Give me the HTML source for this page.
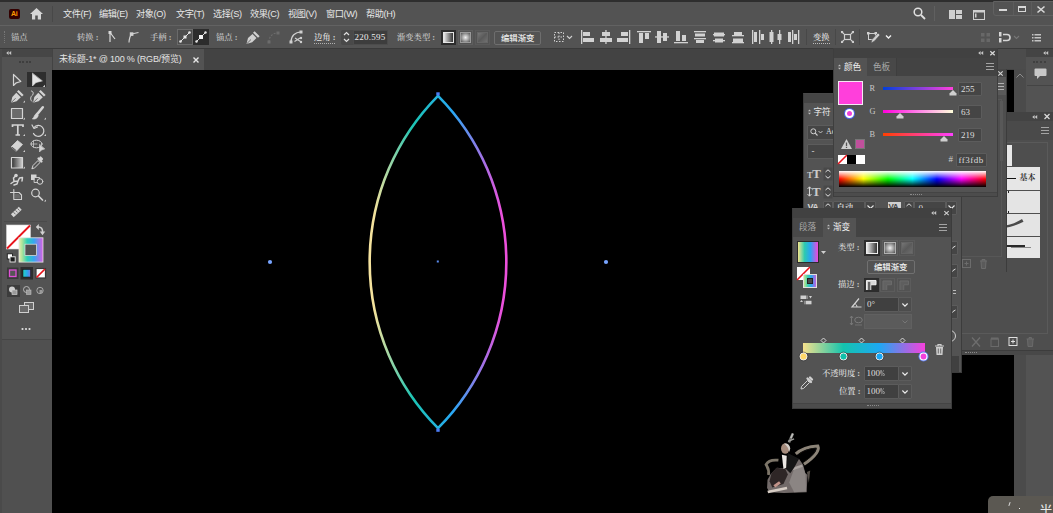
<!DOCTYPE html>
<html><head><meta charset="utf-8">
<style>
*{box-sizing:border-box;margin:0;padding:0}
html,body{width:1053px;height:513px;overflow:hidden;background:#535353}
body{position:relative;font-family:"Liberation Sans","Noto Sans CJK SC",sans-serif;font-size:9px;color:#dcdcdc}
.a{position:absolute}
.t{position:absolute;white-space:nowrap;line-height:12px;font-size:9px;color:#d8d8d8}
.m{position:absolute;white-space:nowrap;line-height:12px;font-size:9.2px;letter-spacing:-0.4px;color:#e6e6e6;top:5.5px}
.s{position:absolute;white-space:nowrap;line-height:12px;font-size:8.3px;color:#d0d0d0;font-family:"Liberation Serif","Noto Serif CJK SC",serif;font-weight:600}
.n{position:absolute;white-space:nowrap;line-height:12px;font-size:9px;color:#dedede;font-family:"Liberation Serif","Noto Serif CJK SC",serif}
.inp{position:absolute;background:#454545;border:1px solid #5c5c5c;border-radius:1px}
svg{position:absolute;overflow:visible}
</style></head><body>
<!-- canvas -->
<div class="a" id="canvas" style="left:52px;top:70px;width:962px;height:443px;background:#000"></div>
<!-- top strip -->
<div class="a" style="left:0;top:0;width:1053px;height:2px;background:#2e2e2e"></div>
<!-- menubar -->
<div class="a" id="menubar" style="left:0;top:2px;width:1053px;height:23px;background:#535353">
  <!-- Ai logo -->
  <div class="a" style="left:9px;top:7px;width:11px;height:10px;background:#330000;border-radius:2px"></div>
  <div class="a" style="left:11px;top:6px;font:bold 7px/12px 'Liberation Sans',sans-serif;color:#ff9a00;letter-spacing:-0.3px">Ai</div>
  <!-- home -->
  <svg style="left:30px;top:6px" width="13" height="12" viewBox="0 0 13 12"><path d="M6.5 0 L13 6 H11 V11.5 H7.8 V7.5 H5.2 V11.5 H2 V6 H0 Z" fill="#d6d6d6"/></svg>
  <div class="a" style="left:52px;top:4px;width:1px;height:16px;background:#484848"></div>
  <div class="m" style="left:63px">文件(F)</div>
  <div class="m" style="left:99px">编辑(E)</div>
  <div class="m" style="left:136px">对象(O)</div>
  <div class="m" style="left:176px">文字(T)</div>
  <div class="m" style="left:213px">选择(S)</div>
  <div class="m" style="left:250px">效果(C)</div>
  <div class="m" style="left:288px">视图(V)</div>
  <div class="m" style="left:326px">窗口(W)</div>
  <div class="m" style="left:366px">帮助(H)</div>
  <!-- search -->
  <svg style="left:913px;top:5px" width="13" height="13" viewBox="0 0 13 13"><circle cx="5" cy="5" r="3.8" fill="none" stroke="#e0e0e0" stroke-width="1.5"/><path d="M8 8 L12 12" stroke="#e0e0e0" stroke-width="1.8"/></svg>
  <div class="a" style="left:934px;top:4px;width:1px;height:15px;background:#606060"></div>
  <!-- arrange docs -->
  <svg style="left:949px;top:8px" width="13" height="9" viewBox="0 0 13 9"><rect x="0" y="0" width="6" height="9" fill="#d0d0d0"/><rect x="7" y="0" width="6" height="4" fill="#d0d0d0"/><rect x="7" y="5" width="6" height="4" fill="#d0d0d0"/></svg>
  <!-- workspace -->
  <svg style="left:973px;top:8px" width="12" height="10" viewBox="0 0 12 10"><rect x="0.5" y="0.5" width="11" height="9" fill="none" stroke="#d0d0d0" stroke-width="1"/><rect x="1" y="1" width="10" height="1.5" fill="#d0d0d0"/><rect x="2" y="3.5" width="1.5" height="4" fill="#d0d0d0"/></svg>
  <!-- window buttons -->
  <div class="a" style="left:993px;top:-1px;width:62px;height:15px;border:1px solid #616161;border-radius:0 0 0 3px"></div>
  <div class="a" style="left:1013px;top:0;width:1px;height:13px;background:#5c5c5c"></div>
  <div class="a" style="left:1031px;top:0;width:1px;height:13px;background:#5c5c5c"></div>
  <div class="a" style="left:999px;top:7px;width:8px;height:2px;background:#d8d8d8"></div>
  <div class="a" style="left:1018px;top:4px;width:8px;height:6px;border:2px solid #d8d8d8;border-width:2px 1.5px 1.5px 1.5px"></div>
  <svg style="left:1037px;top:4px" width="8" height="7" viewBox="0 0 8 7"><path d="M0.5 0.5 L7.5 6.5 M7.5 0.5 L0.5 6.5" stroke="#d8d8d8" stroke-width="1.6"/></svg>
</div>
<!-- control bar -->
<div class="a" id="ctrl" style="left:0;top:25px;width:1053px;height:24px;background:#535353;border-top:1px solid #626262;border-bottom:1px solid #3a3a3a">
  <div class="a" style="left:4px;top:5px;width:2px;height:12px;border-left:1px dotted #777"></div>
  <div class="s" style="left:11px;top:6px;color:#bcbcbc">锚点</div>
  <div class="s" style="left:77px;top:6px;color:#c0c0c0">转换 :</div>
  <svg style="left:107px;top:5px" width="10" height="12" viewBox="0 0 10 12"><path d="M3 1 V11 M3 1.5 L8 8" stroke="#d8d8d8" stroke-width="1.2" fill="none"/><rect x="1.5" y="0" width="3" height="3" fill="#d8d8d8"/></svg>
  <svg style="left:127px;top:5px" width="12" height="12" viewBox="0 0 12 12"><path d="M2 11.500 C2.300 7 3 5 4.500 3.200 C7 2.300 9 2 11.500 1.500" stroke="#d0d0d0" stroke-width="1.200" fill="none"/><rect x="2.800" y="1.300" width="3.600" height="3.600" fill="#d0d0d0"/></svg>
  <div class="s" style="left:150px;top:6px;color:#c0c0c0">手柄 :</div>
  <div class="a" style="left:177px;top:3px;width:16px;height:16px;border:1px solid #6a6a6a;background:#4c4c4c"></div>
  <div class="a" style="left:193px;top:3px;width:16px;height:16px;background:#2c2c2c"></div>
  <svg style="left:179px;top:5px" width="12" height="12" viewBox="0 0 12 12"><path d="M1 11 L11 1" stroke="#e0e0e0" stroke-width="1"/><rect x="4.5" y="4.5" width="3" height="3" fill="#e8e8e8"/><circle cx="1.5" cy="10.5" r="1.3" fill="#e8e8e8"/><circle cx="10.5" cy="1.5" r="1.3" fill="#e8e8e8"/></svg>
  <svg style="left:195px;top:5px" width="12" height="12" viewBox="0 0 12 12"><path d="M1 11 L11 1" stroke="#e0e0e0" stroke-width="1"/><rect x="4" y="4" width="4" height="4" fill="#f4f4f4"/><circle cx="1.5" cy="10.5" r="1.2" fill="#e8e8e8"/><circle cx="10.5" cy="1.5" r="1.2" fill="#e8e8e8"/></svg>
  <div class="s" style="left:216px;top:6px;color:#c0c0c0">锚点 :</div>
  <!-- pen icon -->
  <svg style="left:245px;top:4px" width="15" height="15" viewBox="0 0 15 15"><path d="M1.500 14 L3 8 L7.500 4 L11.500 8 L7.200 12.300 Z" fill="#d0d0d0"/><path d="M1.800 13.700 L6 9.500" stroke="#535353" stroke-width="0.800"/><path d="M8.800 2 L13.800 7" stroke="#d0d0d0" stroke-width="2.300"/></svg>
  <svg style="left:267px;top:5px" width="13" height="13" viewBox="0 0 13 13"><path d="M2 11 C2 5.500 5.500 2 11 2" stroke="#6c6c6c" stroke-width="1.100" fill="none" stroke-dasharray="2 1.300"/><rect x="0.500" y="9.500" width="3" height="3" fill="#6c6c6c"/><rect x="9.500" y="0.500" width="3" height="3" fill="#6c6c6c"/></svg>
  <svg style="left:289px;top:4px" width="14" height="14" viewBox="0 0 14 14"><path d="M2 12 C2 6 6 2 12 2" stroke="#d0d0d0" stroke-width="1.200" fill="none"/><rect x="0.500" y="10.500" width="3" height="3" fill="#d0d0d0"/><rect x="10.500" y="0.500" width="3" height="3" fill="#d0d0d0"/><path d="M5.500 11.500 L11 8 M6 8 L11.500 11.500" stroke="#d0d0d0" stroke-width="1.100"/><circle cx="12" cy="8" r="1.200" fill="#d0d0d0"/><circle cx="12" cy="12" r="1.200" fill="#d0d0d0"/></svg>
  <div class="s" style="left:314px;top:5px;color:#dedede;border-bottom:1px dotted #b0b0b0;line-height:11px;top:6px">边角 :</div>
  <div class="a" style="left:340.500px;top:4px;width:12px;height:15px;background:#494949;border-radius:2px 0 0 2px"></div>
  <svg style="left:343px;top:5px" width="7" height="12" viewBox="0 0 7 12"><path d="M1 4 L3.5 1.5 L6 4 M1 8 L3.5 10.5 L6 8" stroke="#e0e0e0" stroke-width="1.2" fill="none"/></svg>
  <div class="a" style="left:352.500px;top:4px;width:35px;height:15px;background:#3d3d3d;border:1px solid #4c4c4c"></div>
  <div class="n" style="left:354.5px;top:5px;color:#ececec;letter-spacing:0.25px">220.595</div>
  <div class="s" style="left:397px;top:6px;color:#c0c0c0">渐变类型 :</div>
  <div class="a" style="left:441px;top:4px;width:15px;height:15px;background:#2c2c2c"></div>
  <div class="a" style="left:443px;top:6px;width:11px;height:11px;border:1px solid #e4e4e4;background:linear-gradient(90deg,#e8e8e8,#333)"></div>
  <div class="a" style="left:458px;top:4px;width:15px;height:15px;border:1px solid #5e5e5e"></div>
  <div class="a" style="left:460px;top:6px;width:11px;height:11px;border:1px solid #9a9a9a;background:radial-gradient(circle,#f0f0f0,#555)"></div>
  <div class="a" style="left:475px;top:4px;width:15px;height:15px;border:1px solid #5a5a5a"></div>
  <div class="a" style="left:477px;top:6px;width:11px;height:11px;border:1px solid #666;background:linear-gradient(135deg,#777,#5a5a5a 50%,#707070)"></div>
  <div class="a" style="left:494px;top:4.500px;width:47px;height:14.500px;border:1px solid #6e6e6e;border-radius:2px"></div>
  <div class="t" style="left:501px;top:5.800px;color:#ececec;font-weight:500;font-size:8.400px">编辑渐变</div>
  <!-- grid -->
  <svg style="left:553px;top:5px" width="20" height="12" viewBox="0 0 20 12"><rect x="1.5" y="1.5" width="9" height="9" fill="none" stroke="#d0d0d0" stroke-width="1" stroke-dasharray="1.5 1.5"/><path d="M1.5 6 H10.5 M6 1.5 V10.5" stroke="#d0d0d0" stroke-width="1" stroke-dasharray="1.5 1.5"/><path d="M14 5 L16.5 7.5 L19 5" stroke="#d0d0d0" stroke-width="1.1" fill="none"/></svg>
  <!-- align icons -->
  <svg style="left:580px;top:4px" width="230" height="14" viewBox="0 0 230 14">
   <g fill="#d2d2d2">
    <rect x="1" y="0" width="1.3" height="14"/><rect x="3" y="2" width="7" height="4"/><rect x="3" y="8" width="11" height="4"/>
    <rect x="25.3" y="0" width="1.3" height="14"/><rect x="22" y="2" width="8" height="4"/><rect x="20" y="8" width="12" height="4"/>
    <rect x="49" y="0" width="1.3" height="14"/><rect x="41" y="2" width="7" height="4"/><rect x="37" y="8" width="11" height="4"/>
    <rect x="57" y="1" width="14" height="1.3"/><rect x="59" y="3" width="4" height="10"/><rect x="65" y="3" width="4" height="6"/>
    <rect x="75" y="6.3" width="14" height="1.3"/><rect x="77" y="1" width="4" height="12"/><rect x="83" y="3" width="4" height="8"/>
    <rect x="94" y="12" width="14" height="1.3"/><rect x="96" y="1" width="4" height="10"/><rect x="102" y="5" width="4" height="6"/>
    <rect x="114" y="1" width="12" height="1.3"/><rect x="115" y="3.5" width="10" height="3"/><rect x="114" y="8" width="12" height="1.3"/><rect x="116" y="10" width="8" height="3"/>
    <rect x="133" y="4" width="12" height="1.3"/><rect x="134" y="2.5" width="10" height="4"/><rect x="133" y="10" width="12" height="1.3"/><rect x="135" y="8.5" width="8" height="4"/>
    <rect x="152" y="5" width="12" height="1.3"/><rect x="154" y="2" width="8" height="3"/><rect x="152" y="12" width="12" height="1.3"/><rect x="153" y="8.5" width="10" height="3.5"/>
    <rect x="172" y="0" width="1.3" height="14"/><rect x="174" y="2" width="3" height="10"/><rect x="179" y="0" width="1.3" height="14"/><rect x="181" y="4" width="3" height="6"/>
    <rect x="191" y="0" width="1.3" height="14"/><rect x="189.5" y="2" width="4" height="10"/><rect x="199" y="0" width="1.3" height="14"/><rect x="197.5" y="4" width="4" height="6"/>
    <rect x="212" y="0" width="1.3" height="14"/><rect x="208" y="2" width="3" height="10"/><rect x="218" y="0" width="1.3" height="14"/><rect x="214" y="4" width="3" height="6"/>
   </g>
  </svg>
  <div class="a" style="left:806px;top:3px;width:1px;height:16px;background:#484848"></div>
  <div class="s" style="left:813px;top:6px;color:#dedede;border-bottom:1px dotted #bbb;line-height:11px">变换</div>
  <div class="a" style="left:835px;top:3px;width:1px;height:16px;background:#484848"></div>
  <svg style="left:841px;top:5px" width="13" height="12" viewBox="0 0 13 12"><rect x="3.5" y="3.5" width="6" height="5" fill="none" stroke="#d0d0d0" stroke-width="1.2"/><path d="M0.5 0.5 L3 3 M12.5 0.5 L10 3 M0.5 11.5 L3 9 M12.5 11.5 L10 9" stroke="#d0d0d0" stroke-width="1.2"/><path d="M0 0 H2.5 L0 2.5 Z M13 0 H10.5 L13 2.5 Z M0 12 H2.5 L0 9.500 Z M13 12 H10.5 L13 9.5 Z" fill="#d0d0d0"/></svg>
  <div class="a" style="left:859px;top:3px;width:1px;height:16px;background:#484848"></div>
  <svg style="left:867px;top:4px" width="28" height="14" viewBox="0 0 28 14"><rect x="1.5" y="3.5" width="7" height="6" fill="none" stroke="#d0d0d0" stroke-width="1"/><rect x="0" y="2" width="2.5" height="2.5" fill="#d0d0d0"/><rect x="7.500" y="2" width="2.5" height="2.5" fill="#d0d0d0"/><path d="M4 13 L5 9.500 L11 3 L13 5 L7 11.5 Z" fill="#d0d0d0" stroke="#535353" stroke-width="0.6"/><path d="M19 5.500 L21.5 8 L24 5.500" stroke="#f0f0f0" stroke-width="1.4" fill="none"/></svg>
  <!-- right icons -->
  <svg style="left:981px;top:7px" width="9" height="9" viewBox="0 0 9 9"><g fill="#686868"><rect x="0" y="0" width="3.500" height="3.500"/><rect x="5.500" y="0" width="3.500" height="3.500"/><rect x="0" y="5.500" width="3.500" height="3.500"/><rect x="5.500" y="5.500" width="3.500" height="3.500"/></g></svg>
  <svg style="left:999px;top:6px" width="24" height="11" viewBox="0 0 24 11"><rect x="0" y="0" width="2.500" height="4.500" fill="#d6d6d6"/><rect x="0" y="6" width="2.500" height="4.500" fill="#d6d6d6"/><path d="M4 2.500 H8 A2.800 2.800 0 0 1 8 8.500 H4" stroke="#d6d6d6" stroke-width="1.600" fill="none"/><path d="M15 4 L17.500 6.500 L20 4" stroke="#777" stroke-width="1.100" fill="none"/></svg>
  <svg style="left:1032px;top:8px" width="9" height="8" viewBox="0 0 9 8"><g fill="#c4c4c4"><rect x="0" y="0" width="1.500" height="1.500"/><rect x="2.500" y="0" width="6.500" height="1.500"/><rect x="0" y="3" width="1.500" height="1.500"/><rect x="2.500" y="3" width="6.500" height="1.500"/><rect x="0" y="6" width="1.500" height="1.500"/><rect x="2.500" y="6" width="6.500" height="1.500"/></g></svg>
</div>
<!-- tab bar -->
<div class="a" id="tabbar" style="left:52px;top:49px;width:974px;height:21px;background:#434343"></div>
<div class="a" style="left:998px;top:49px;width:28px;height:20px;background:#4c4c4c"></div>
<div class="a" id="tab" style="left:53px;top:49px;width:151px;height:21px;background:#535353"></div>
<div class="t" style="left:59px;top:52.5px;color:#e4e4e4;font-size:9px;letter-spacing:-0.18px">未标题-1* @ 100 % (RGB/预览)</div>
<svg style="left:192.5px;top:56.5px" width="6" height="6" viewBox="0 0 6 6"><path d="M0.500 0.500 L5.500 5.500 M5.500 0.500 L0.500 5.500" stroke="#e8e8e8" stroke-width="1.400"/></svg>
<!-- toolbar -->
<div class="a" id="toolbar" style="left:0;top:49px;width:52px;height:464px;background:#535353;border-left:2px solid #4a4a4a">
</div>
<div class="a" style="left:2px;top:49px;width:50px;height:8px;background:#464646"></div>
<svg style="left:6px;top:51px" width="6" height="4" viewBox="0 0 6 4"><path d="M2.600 0.100 L0.200 2 L2.600 3.900 Z M5.200 0.100 L2.800 2 L5.200 3.900 Z" fill="#c6c6c6"/></svg>
<div class="a" style="left:19px;top:61px;width:12px;height:2px;border-top:2px dotted #3e3e3e"></div>
<div class="a" style="left:2px;top:339px;width:50px;height:1px;background:#454545"></div>
<div class="a" style="left:4px;top:221px;width:43px;height:1px;background:#4a4a4a"></div>
<div class="a" style="left:2px;top:340px;width:50px;height:173px;background:#505050"></div>
<!-- selected tool bg -->
<div class="a" style="left:27px;top:72px;width:19px;height:15px;background:#2e2e2e"></div>
<svg id="tools" style="left:0;top:0" width="52" height="340" viewBox="0 0 52 340">
 <g fill="none" stroke="#d4d4d4" stroke-width="1.200" stroke-linejoin="round" stroke-linecap="round">
  <!-- selection hollow arrow -->
  <path d="M13.500 74.500 V85.500 L16.300 82.800 L20.800 81.500 Z"/>
  <!-- direct selection filled -->
  <path d="M32.500 73.500 V86 L36 82.500 L42 81 Z" fill="#e4e4e4" stroke="#e4e4e4" stroke-width="0.600"/>
  <!-- pen -->
  <path d="M11 102.800 L12.300 97 L16.300 92.800 L20.800 97.300 L16.600 101.300 Z" fill="#d4d4d4" stroke="none"/>
  <path d="M11.300 102.500 L15.300 98.500" stroke="#535353" stroke-width="0.800"/>
  <path d="M17.800 90.800 L22.800 95.800" stroke-width="2.300" stroke-linecap="butt"/>
  <!-- curvature -->
  <path d="M33 102.800 L34.300 97 L38.300 92.800 L42.800 97.300 L38.600 101.300 Z" fill="#d4d4d4" stroke="none"/>
  <path d="M33.300 102.500 L37.300 98.500" stroke="#535353" stroke-width="0.800"/>
  <path d="M39.800 90.800 L44.800 95.800" stroke-width="2.300" stroke-linecap="butt"/>
  <path d="M31.500 91 C34 91.500 33.500 94.500 32 95.500 C30 97.500 30.500 100.500 32 101.500" stroke-width="1"/>
  <!-- rectangle -->
  <rect x="11.500" y="108.500" width="11" height="10" fill="#6a6a6a"/>
  <!-- brush -->
  <path d="M42.800 107.300 L37.300 114" stroke-width="2.600"/>
  <path d="M36.300 113.500 L38.300 115.500 C37.500 118.500 35 119.500 32.300 119 C34 118 34 115 36.300 113.500 Z" fill="#d4d4d4" stroke-width="0.600"/>
  <!-- T -->
  <path d="M12.500 127 V125 H23 V127 M17.800 125 V135 M15.500 135 H20" stroke-width="1.700" stroke-linecap="butt" stroke-linejoin="miter"/>
  <!-- rotate -->
  <path d="M34 127.500 A5.500 5.500 0 1 1 33.500 133.500" stroke-width="1.200"/>
  <path d="M32 125 L34 128.500 L37.500 127" stroke-width="1.200"/>
  <path d="M33.500 133.500 A5.500 5.500 0 0 0 36 136" stroke-dasharray="1 1.300" stroke-width="1"/>
  <!-- eraser -->
  <path d="M11.500 146.500 L17.500 140.500 L22.500 144.500 L16.500 151 Z" fill="#d4d4d4" stroke-width="0.800"/>
  <path d="M12.500 147.500 L16 150.500" stroke="#535353" stroke-width="1"/>
  <!-- shape builder-ish -->
  <ellipse cx="36.500" cy="144" rx="5.500" ry="3.800" stroke-width="1"/>
  <path d="M33.500 141 V147 M31 144 H37" stroke-width="0.700"/>
  <path d="M39.500 144.500 V152 L41.500 150 L44.500 149 Z" fill="#d4d4d4" stroke-width="0.600"/>
  <!-- gradient -->
  <rect x="11.500" y="157.500" width="11" height="10.500" fill="url(#gg)"/>
  <!-- eyedropper -->
  <path d="M32 168.500 L33 165.500 L38 160.500 L40 162.500 L35 167.500 Z" stroke-width="1"/>
  <path d="M38.500 158.500 L41.500 161.500 M40.500 157.500 L42 159" stroke-width="2.200"/>
  <!-- puppet warp -->
  <path d="M11 183.500 L14 181.500 L13.500 178 L16 175.500 M14 181.500 L18 181 L19.500 178 L22.500 177.500 L22 181 M18 181 L17 184 L14 185" stroke-width="1.500"/>
  <circle cx="16" cy="175.500" r="1.200" fill="#d4d4d4"/>
  <!-- shapes -->
  <rect x="31" y="174.500" width="5.500" height="5.500" fill="#d4d4d4" stroke="none"/>
  <rect x="34.500" y="177.500" width="5" height="5" fill="#535353" stroke-width="0.900"/>
  <circle cx="40" cy="181.500" r="2.800" fill="#535353" stroke-width="1"/>
  <!-- artboard -->
  <path d="M10.500 192.500 H14 M13.800 189.500 V199 M13.800 192.500 H19 L21.500 195 V199.500 H13.800" stroke-width="1.100"/>
  <path d="M15 194 H18.500 L20.500 196 V198.500 H15 Z" fill="#6a6a6a" stroke="none"/>
  <!-- zoom -->
  <circle cx="35.500" cy="193" r="3.800" stroke-width="1.200"/>
  <path d="M38.500 196 L42.500 200" stroke-width="1.700"/>
  <!-- ruler-like -->
  <path d="M10.900 214.300 L18.800 206.700 L21.700 209.700 L13.700 217.300 Z" fill="#d4d4d4" stroke="none"/><path d="M13.800 212.500 L15.200 214 M15.800 210.600 L17.200 212.100 M17.800 208.700 L19.200 210.200" stroke="#535353" stroke-width="0.800"/>
 </g>
 <defs><linearGradient id="gg" x1="0" x2="1" y1="0" y2="0"><stop offset="0" stop-color="#303030"/><stop offset="1" stop-color="#d0d0d0"/></linearGradient></defs>
 <!-- small corner triangles -->
 <g fill="#cfcfcf">
  <path d="M45 87 V84.800 L42.800 87 Z"/>
  <path d="M25 102.500 V100.500 L23 102.500 Z"/>
  <path d="M25 119.500 V117.500 L23 119.500 Z"/><path d="M46 119.500 V117.500 L44 119.500 Z"/>
  <path d="M25 136 V134 L23 136 Z"/><path d="M46 136 V134 L44 136 Z"/>
  <path d="M25 152 V150 L23 152 Z"/>
  <path d="M25 168.500 V166.500 L23 168.500 Z"/>
  <path d="M46 201.500 V199.500 L44 201.500 Z"/>
 </g>
 <!-- fill (none) -->
 <rect x="6.500" y="225" width="24" height="24" fill="#ffffff" stroke="#d8d8d8" stroke-width="0.600"/>
 <path d="M7 248.500 L30 225.500" stroke="#e8141c" stroke-width="1.800"/>
 <!-- stroke box gradient -->
 <rect x="19" y="237.800" width="24" height="24.300" fill="url(#sg)" stroke="#e4e4e4" stroke-width="0.800"/>
 <rect x="25" y="244.200" width="11.600" height="11.300" fill="#525252" stroke="#e8e8e8" stroke-width="0.700"/>
 <defs><linearGradient id="sg" x1="0" x2="1" y1="0" y2="0"><stop offset="0" stop-color="#e4eeb8"/><stop offset="0.120" stop-color="#b4e49a"/><stop offset="0.340" stop-color="#2ed0b4"/><stop offset="0.620" stop-color="#36a6f0"/><stop offset="1" stop-color="#d860e4"/></linearGradient></defs>
 <!-- swap arrow -->
 <path d="M37.500 227 C41.500 226.500 42.800 229 42.500 232.500" stroke="#d0d0d0" stroke-width="1.500" fill="none"/>
 <path d="M38.800 224 L35.800 227 L38.800 230 Z M39.800 231.500 L42.500 235.200 L45.200 231.500 Z" fill="#d0d0d0"/>
 <!-- default fill/stroke -->
 <rect x="7.300" y="253.800" width="5.200" height="5.200" fill="#fff" stroke="#1c1c1c" stroke-width="0.900"/>
 <rect x="10" y="256.800" width="5.200" height="5.200" fill="#1c1c1c" stroke="#f0f0f0" stroke-width="0.900"/>
 <!-- colour / gradient / none buttons -->
 <rect x="7.500" y="268" width="10.500" height="10.500" fill="#3a3a3a" stroke="#3a3a3a"/>
 <rect x="9.500" y="270" width="6.500" height="6.500" fill="#555" stroke="#e050d8" stroke-width="1.300"/>
 <rect x="20.500" y="267" width="12.500" height="12.500" fill="#2d2d2d"/>
 <rect x="23" y="269.500" width="7.500" height="7.500" fill="url(#bg2)" stroke="#111" stroke-width="0.500"/>
 <defs><linearGradient id="bg2" x1="0" x2="1" y1="0" y2="0"><stop offset="0" stop-color="#25d0c0"/><stop offset="0.550" stop-color="#2aa8ee"/><stop offset="1" stop-color="#7a74e0"/></linearGradient></defs>
 <rect x="36" y="268.500" width="9.500" height="9.500" fill="#fff" stroke="#3a3a3a" stroke-width="1.200"/>
 <path d="M36.500 277.500 L45 269" stroke="#e8141c" stroke-width="1.700"/>
 <!-- draw modes -->
 <rect x="7" y="285" width="13" height="12" fill="#3c3c3c"/>
 <circle cx="12" cy="289.500" r="3" fill="#cfcfcf"/><rect x="12" y="290" width="5" height="4.500" fill="#9a9a9a" stroke="#cfcfcf" stroke-width="0.700"/>
 <circle cx="26.500" cy="289.500" r="3" fill="none" stroke="#c0c0c0" stroke-width="0.900"/><rect x="26.500" y="290" width="4.500" height="4.500" fill="#9a9a9a" stroke="#c0c0c0" stroke-width="0.600"/>
 <circle cx="40" cy="290.500" r="3.200" fill="none" stroke="#b0b0b0" stroke-width="0.900"/><rect x="39.500" y="290" width="3" height="3" fill="#9a9a9a"/>
 <!-- screen mode -->
 <rect x="24.500" y="302.500" width="9" height="7" fill="#6a6a6a" stroke="#cfcfcf" stroke-width="1"/>
 <rect x="19.500" y="305.500" width="9" height="7" fill="#6a6a6a" stroke="#cfcfcf" stroke-width="1"/>
 <!-- dots -->
 <circle cx="22.500" cy="329" r="1.100" fill="#e0e0e0"/><circle cx="26" cy="329" r="1.100" fill="#e0e0e0"/><circle cx="29.500" cy="329" r="1.100" fill="#e0e0e0"/>
</svg>
<!-- artwork -->
<svg id="art" style="left:0;top:0" width="1053" height="513" viewBox="0 0 1053 513">
 <defs>
  <linearGradient id="lg" gradientUnits="userSpaceOnUse" x1="368.500" y1="0" x2="507.700" y2="0">
   <stop offset="0" stop-color="#f6e4a0"/><stop offset="0.040" stop-color="#f4e29c"/><stop offset="0.320" stop-color="#1cc4b4"/><stop offset="0.600" stop-color="#28a8f4"/><stop offset="0.960" stop-color="#ec50dc"/><stop offset="1" stop-color="#ec50dc"/>
  </linearGradient>
 </defs>
 <path d="M438 95.800 A236.300 236.300 0 0 1 438 428.200 A236.300 236.300 0 0 1 438 95.800 Z" fill="none" stroke="url(#lg)" stroke-width="2.600" stroke-linejoin="miter"/>
 <rect x="436.300" y="92.300" width="3.400" height="3.200" fill="#4c7cf6"/>
 <rect x="436.300" y="428.600" width="3.400" height="3.200" fill="#4c7cf6"/>
 <circle cx="270" cy="262" r="2.100" fill="#78a4ff"/>
 <circle cx="606" cy="262" r="2.100" fill="#78a4ff"/>
 <rect x="436.800" y="260.500" width="2" height="2" fill="#5a8cf0"/>
 <!-- figure -->
 <g id="fig" transform="translate(760 428) scale(0.13646)" filter="url(#fb)">
  <path d="M241 40 L212 106" stroke="#6e6e6c" stroke-width="20"/>
  <path d="M241 40 L226 74" stroke="#c0c0bc" stroke-width="12"/>
  <path d="M206 98 L250 80" stroke="#9c9c98" stroke-width="9"/>
  <path d="M262 190 C290 165 330 138 424 132 C436 160 410 205 322 266" stroke="#8c8478" stroke-width="22" fill="none"/>
  <path d="M280 196 C310 172 350 152 408 148 C410 172 385 205 325 246" stroke="#14120f" stroke-width="6" fill="none"/>
  <path d="M135 236 C100 232 58 240 44 268 C56 290 70 305 62 345" stroke="#7c7468" stroke-width="20" fill="none"/>
  <path d="M285 225 L316 270 L332 330 L348 345 L342 470 L175 476 L70 470 L52 440 L55 380 L80 335 L125 292 L195 298 Z" fill="#726b69"/>
  <path d="M250 300 L312 274 L334 340 L338 465 L250 470 L214 400 Z" fill="#8b8583"/>
  <path d="M222 296 L308 268 L314 284 L236 312 Z" fill="#aaa4a0"/>
  <path d="M120 292 L186 300 L204 340 L172 410 L90 436 L70 390 L84 332 Z" fill="#2e2727"/>
  <path d="M204 184 L286 226 L250 292 L222 332 L192 302 L198 240 Z" fill="#161313"/>
  <ellipse cx="185" cy="150" rx="31" ry="38" fill="#a58b7c"/>
  <path d="M176 114 Q215 108 222 150 L214 176 Q208 138 176 114 Z" fill="#d2cdc8"/>
  <path d="M160 196 L196 204 L192 292 L172 300 L166 250 Z" fill="#ebe7e3"/>
  <path d="M98 420 L140 390 L152 406 L112 436 Z" fill="#c3948a"/>
  <path d="M54 460 L196 430 L200 448 L60 478 Z" fill="#d6ccc4"/>
  <path d="M344 322 L368 312 L358 402 Z" fill="#56504a"/>
 </g>
 <defs><filter id="fb" x="-10%" y="-10%" width="120%" height="120%"><feGaussianBlur stdDeviation="3"/></filter></defs>
</svg>
<!-- bottom right overlay -->
<div class="a" style="left:988px;top:496px;width:66px;height:18px;background:#5b5852;border-radius:5px 0 0 0;z-index:50"></div>
<div class="a" style="left:1039px;top:503px;font-size:14px;line-height:16px;color:#e8e8e8;z-index:51">半</div>
<div class="a" style="left:1009px;top:502px;width:1px;height:4px;background:#ddd;transform:rotate(20deg);z-index:51"></div>
<div class="a" style="left:1019px;top:508px;width:1px;height:1px;background:#eee;z-index:51"></div>
<!-- doc scrollbar + right dock -->
<div class="a" style="left:1014px;top:69px;width:12px;height:444px;background:#4b4b4b"></div>
<svg style="left:1016px;top:73px" width="8" height="5" viewBox="0 0 8 5"><path d="M0.500 4.500 L4 1 L7.500 4.500" stroke="#8c8c8c" stroke-width="1" fill="none"/></svg>
<div class="a" style="left:1026px;top:49px;width:27px;height:464px;background:#535353"></div>
<div class="a" style="left:1026px;top:49px;width:27px;height:8px;background:#444"></div>
<svg style="left:1043px;top:51px" width="6" height="4" viewBox="0 0 6 4"><path d="M2.600 0.100 L0.200 2 L2.600 3.900 Z M5.200 0.100 L2.800 2 L5.200 3.900 Z" fill="#c6c6c6"/></svg>
<div class="a" style="left:1033px;top:61px;width:13px;height:2px;border-top:2px dotted #404040"></div>
<svg style="left:1034px;top:68px" width="13" height="12" viewBox="0 0 13 12"><path d="M1.500 0.500 H11.500 Q12.500 0.500 12.500 1.500 V7 Q12.500 8 11.500 8 H6 L3 11 V8 H1.500 Q0.500 8 0.500 7 V1.500 Q0.500 0.500 1.500 0.500 Z" fill="#c8c8c8"/></svg>
<div class="a" style="left:1027px;top:85px;width:26px;height:1px;background:#444"></div>

<!-- brushes panel -->
<div class="a" id="brushes" style="left:900px;top:112px;width:153px;height:243px;background:#4e4e4e;border-left:1px solid #3a3a3a">
  <div class="a" style="left:0;top:0;width:153px;height:9px;background:#434343"></div>
  <svg style="left:131px;top:2.500px" width="6" height="4" viewBox="0 0 6 4"><path d="M2.600 0.100 L0.200 2 L2.600 3.900 Z M5.200 0.100 L2.800 2 L5.200 3.900 Z" fill="#c6c6c6"/></svg>
  <svg style="left:143px;top:2px" width="6" height="5" viewBox="0 0 6 5"><path d="M0.500 0 L5.500 5 M5.500 0 L0.500 5" stroke="#dcdcdc" stroke-width="1.200"/></svg>
  <div class="a" style="left:0;top:9px;width:153px;height:19px;background:#4a4a4a"></div>
  <div class="a" style="left:140px;top:15px;width:8px;height:7px;border-top:1px solid #a4a4a4;border-bottom:1px solid #a4a4a4"></div>
  <div class="a" style="left:140px;top:18px;width:8px;height:1px;background:#a4a4a4"></div>
  <!-- list bordered area -->
  <div class="a" style="left:4px;top:30px;width:143px;height:192px;border:1px solid #5a5a5a;background:#4e4e4e"></div>
  <!-- rows -->
  <div class="a" style="left:100px;top:33px;width:11px;height:21px;background:#e8e8e8"></div>
  <div class="a" style="left:100px;top:55px;width:39px;height:22.500px;background:#e6e6e6"></div>
  <div class="a" style="left:100px;top:78.500px;width:39px;height:22px;background:#e4e4e4"></div>
  <div class="a" style="left:100px;top:101.500px;width:39px;height:22px;background:#e4e4e4"></div>
  <div class="a" style="left:100px;top:124.500px;width:39px;height:21px;background:#e6e6e6"></div>
  <div class="a" style="left:100px;top:65.500px;width:15px;height:1.300px;background:#111"></div>
  <div class="n" style="left:118.500px;top:60px;color:#222;font-size:8px;font-weight:600">基本</div>
  <div class="a" style="left:107px;top:79px;width:1px;height:2px;background:#222"></div>
  <div class="a" style="left:107px;top:99px;width:1px;height:2px;background:#222"></div>
  <svg style="left:100px;top:104px" width="30" height="14" viewBox="0 0 30 14"><path d="M0 10 C8 9.500 14 7.500 21 3 L22.500 5.800 C15 9.500 8 12 0 12.200 Z" fill="#4a4a4a"/></svg>
  <div class="a" style="left:100px;top:133px;width:24px;height:1.800px;background:#2a2a2a"></div>
  <div class="a" style="left:110px;top:134.500px;width:20px;height:1px;background:#8a8a8a"></div>
  <!-- bottom icons -->
  <svg style="left:70px;top:224px" width="70" height="12" viewBox="0 0 70 12">
    <path d="M1 1.500 L9 10.500 M9 1.500 L1 10.500" stroke="#6e6e6e" stroke-width="1.300"/>
    <rect x="20" y="3" width="7.500" height="7.500" fill="none" stroke="#6a6a6a" stroke-width="1"/><rect x="20" y="1.500" width="7.500" height="2" fill="#6a6a6a"/>
    <rect x="38" y="1.500" width="8" height="8" fill="none" stroke="#e0e0e0" stroke-width="1"/><path d="M42 3.500 V7.500 M40 5.500 H44" stroke="#e0e0e0" stroke-width="1"/>
    <path d="M55.500 3 H63 M58 3 V1.500 H60.500 V3 M56.500 3 L57 10.500 H61.500 L62 3" stroke="#6a6a6a" stroke-width="1" fill="#5c5c5c"/>
  </svg>
  <div class="a" style="left:0;top:238px;width:153px;height:5px;background:#484848;border-top:1px solid #3c3c3c"></div>
  <div class="a" style="left:64px;top:240px;width:12px;height:1px;border-top:1px dotted #8a8a8a"></div>
</div>

<!-- mystery panel (behind colour, in front of brushes) -->
<div class="a" id="myst" style="left:850px;top:69px;width:156.500px;height:203px;background:#4d4d4d;border-right:1px solid #3c3c3c;border-bottom:1px solid #3c3c3c">
  <div class="a" style="left:0;top:0;width:156px;height:8px;background:#464646"></div>
  <svg style="left:147.500px;top:1.500px" width="5" height="5" viewBox="0 0 5 5"><path d="M0.300 0.300 L4.700 4.700 M4.700 0.300 L0.300 4.700" stroke="#d4d4d4" stroke-width="1.100"/></svg>
  <div class="a" style="left:0;top:8px;width:156px;height:18px;background:#595959"></div>
  <div class="a" style="left:148px;top:14px;width:6px;height:7px;border-top:1px solid #b0b0b0;border-bottom:1px solid #b0b0b0"></div>
  <div class="a" style="left:148px;top:17px;width:6px;height:1px;background:#b0b0b0"></div>
  <div class="a" style="left:0;top:26px;width:156px;height:177px;background:#4e4e4e"></div>
  <div class="a" style="left:100px;top:30px;width:52px;height:158px;border:1px solid #575757"></div>
  <div class="a" style="left:150px;top:32px;width:3px;height:60px;background:#585858"></div>
  <svg style="left:112px;top:190px" width="30" height="10" viewBox="0 0 30 10"><rect x="0.500" y="0.500" width="8" height="8" fill="none" stroke="#6c6c6c"/><path d="M4.500 2.500 V6.500 M2.500 4.500 H6.500" stroke="#6c6c6c"/><path d="M18 2 H25 M20 2 V0.500 H23 V2 M19 2 L19.500 9.500 H23.500 L24 2" stroke="#6c6c6c" fill="#5a5a5a"/></svg>
</div>
<!-- character panel -->
<div class="a" id="char" style="left:802.500px;top:92.500px;width:159px;height:280px;background:#535353;border:1px solid #3c3c3c;border-top-color:#484848">
  <div class="a" style="left:0;top:0;width:157px;height:9px;background:#454545"></div>
  <div class="a" style="left:0;top:9px;width:157px;height:18px;background:#454545"></div>
  <div class="a" style="left:0;top:9px;width:40px;height:18px;background:#535353"></div>
  <svg style="left:4px;top:15px" width="3" height="6" viewBox="0 0 3 6"><path d="M0 2.300 L1.500 0.500 L3 2.300 Z M0 3.700 L1.500 5.500 L3 3.700 Z" fill="#bdbdbd"/></svg>
  <div class="t" style="left:10px;top:12px;color:#ececec;font-size:8.600px">字符</div>
  <!-- font search -->
  <div class="inp" style="left:3px;top:31px;width:152px;height:15px"></div>
  <svg style="left:6px;top:34px" width="14" height="9" viewBox="0 0 14 9"><circle cx="3.300" cy="3.300" r="2.500" fill="none" stroke="#d0d0d0" stroke-width="1"/><path d="M5.200 5.200 L7.500 7.500" stroke="#d0d0d0" stroke-width="1.100"/><path d="M8.500 3 L10.500 5 L12.500 3" stroke="#d0d0d0" stroke-width="0.900" fill="none"/></svg>
  <div class="n" style="left:22.500px;top:32px;font-size:8px">Ad</div>
  <div class="inp" style="left:3px;top:50px;width:152px;height:15px"></div>
  <div class="n" style="left:8px;top:51px">-</div>
  <!-- size rows -->
  <div class="a" style="left:3.500px;top:72px;font:bold 13px/16px 'Liberation Serif',serif;color:#cacaca;letter-spacing:-0.500px"><span style="font-size:8.500px">T</span>T</div>
  <div class="inp" style="left:19px;top:73px;width:10.500px;height:14px;border-color:#4e4e4e;background:#494949;border-radius:2px"></div>
  <svg style="left:21px;top:75px" width="6" height="10" viewBox="0 0 6 10"><path d="M0.500 3 L3 0.800 L5.500 3 M0.500 7 L3 9.200 L5.500 7" stroke="#e0e0e0" stroke-width="1" fill="none"/></svg>
  <div class="a" style="left:8.500px;top:90px;font:bold 13px/16px 'Liberation Serif',serif;color:#cacaca">T</div>
  <svg style="left:3px;top:92px" width="5" height="11" viewBox="0 0 5 11"><path d="M2.500 1 V10 M0.500 3 L2.500 0.800 L4.500 3 M0.500 8 L2.500 10.200 L4.500 8" stroke="#d4d4d4" stroke-width="1" fill="none"/></svg>
  <div class="inp" style="left:19px;top:91px;width:10.500px;height:14px;border-color:#4e4e4e;background:#494949;border-radius:2px"></div>
  <svg style="left:21px;top:93px" width="6" height="10" viewBox="0 0 6 10"><path d="M0.500 3 L3 0.800 L5.500 3 M0.500 7 L3 9.200 L5.500 7" stroke="#e0e0e0" stroke-width="1" fill="none"/></svg>
  <!-- VA row -->
  <div class="a" style="left:4px;top:107px;font:bold 9px/12px 'Liberation Sans',sans-serif;color:#d4d4d4;letter-spacing:-0.500px">VA</div>
  <div class="inp" style="left:19px;top:107px;width:10px;height:14px"></div>
  <svg style="left:21px;top:109px" width="6" height="10" viewBox="0 0 6 10"><path d="M0.500 3 L3 0.800 L5.500 3" stroke="#e0e0e0" stroke-width="1" fill="none"/></svg>
  <div class="inp" style="left:29px;top:107px;width:32px;height:14px"></div>
  <div class="s" style="left:33px;top:108px;color:#e0e0e0">自动</div>
  <div class="inp" style="left:61px;top:107px;width:11px;height:14px"></div>
  <svg style="left:63px;top:111.500px" width="7" height="5" viewBox="0 0 7 5"><path d="M0.500 0.500 L3.500 3.500 L6.500 0.500" stroke="#e8e8e8" stroke-width="1.100" fill="none"/></svg>
  <div class="a" style="left:84px;top:108px;width:13px;height:10px;background:#cfcfcf"></div>
  <div class="a" style="left:85px;top:107px;font:bold 8px/12px 'Liberation Sans',sans-serif;color:#444;letter-spacing:-0.500px">VA</div>
  <div class="inp" style="left:100px;top:107px;width:10px;height:14px"></div>
  <svg style="left:102px;top:109px" width="6" height="10" viewBox="0 0 6 10"><path d="M0.500 3 L3 0.800 L5.500 3" stroke="#e0e0e0" stroke-width="1" fill="none"/></svg>
  <div class="inp" style="left:110px;top:107px;width:32px;height:14px"></div>
  <div class="n" style="left:115px;top:108px">0</div>
  <div class="inp" style="left:142px;top:107px;width:11px;height:14px"></div>
  <svg style="left:144px;top:111px" width="7" height="5" viewBox="0 0 7 5"><path d="M0.500 0.500 L3.500 3.500 L6.500 0.500" stroke="#e8e8e8" stroke-width="1.100" fill="none"/></svg>
  <!-- right edge dropdowns visible beside gradient panel -->
  <div class="inp" style="left:140px;top:147px;width:14px;height:14px"></div>
  <svg style="left:147px;top:152px" width="5" height="4" viewBox="0 0 5 4"><path d="M0 3.500 L2 1.500 L4.500 0" stroke="#e0e0e0" stroke-width="1" fill="none"/></svg>
  <div class="inp" style="left:140px;top:170px;width:14px;height:14px"></div>
  <svg style="left:147px;top:175px" width="5" height="4" viewBox="0 0 5 4"><path d="M0 3.500 L2 1.500 L4.500 0" stroke="#e0e0e0" stroke-width="1" fill="none"/></svg>
  <div class="a" style="left:149px;top:196px;width:3px;height:1px;background:#bbb"></div>
  <div class="a" style="left:149px;top:199px;width:3px;height:1px;background:#bbb"></div>
  <div class="inp" style="left:140px;top:211px;width:14px;height:14px"></div>
  <svg style="left:147px;top:216px" width="5" height="4" viewBox="0 0 5 4"><path d="M0 3.500 L2 1.500 L4.500 0" stroke="#e0e0e0" stroke-width="1" fill="none"/></svg>
  <div class="a" style="left:140px;top:236px;width:12px;height:12px;border:1.300px solid #d0d0d0;border-radius:50%"></div>
  <div class="a" style="left:147px;top:262px;width:8px;height:16px;background:#404040"></div>
</div>

<!-- color panel -->
<div class="a" id="color" style="left:833px;top:47.500px;width:165px;height:149px;background:#535353;border:1px solid #3e3e3e;border-top-color:#414141">
  <div class="a" style="left:0;top:0;width:163px;height:9px;background:#414141"></div>
  <svg style="left:143.500px;top:2px" width="6" height="4" viewBox="0 0 6 4"><path d="M2.600 0.100 L0.200 2 L2.600 3.900 Z M5.200 0.100 L2.800 2 L5.200 3.900 Z" fill="#c6c6c6"/></svg>
  <svg style="left:155.500px;top:2px" width="5" height="4.400" viewBox="0 0 5 4.400"><path d="M0.300 0.200 L4.700 4.200 M4.700 0.200 L0.300 4.200" stroke="#dadada" stroke-width="1.200"/></svg>
  <div class="a" style="left:0;top:9px;width:163px;height:18px;background:#434343"></div>
  <div class="a" style="left:0;top:9px;width:33px;height:18px;background:#535353"></div>
  <div class="a" style="left:33px;top:9px;width:30px;height:18px;background:#484848;border-right:1px solid #3e3e3e"></div>
  <svg style="left:4px;top:15px" width="3" height="6" viewBox="0 0 3 6"><path d="M0 2.300 L1.500 0.500 L3 2.300 Z M0 3.700 L1.500 5.500 L3 3.700 Z" fill="#bdbdbd"/></svg>
  <div class="t" style="left:10px;top:12px;color:#f0f0f0;font-size:8.600px">颜色</div>
  <div class="t" style="left:39px;top:12px;color:#a8a8a8;font-size:8.600px">色板</div>
  <div class="a" style="left:152px;top:14px;width:8px;height:7px;border-top:1px solid #a4a4a4;border-bottom:1px solid #a4a4a4"></div>
  <div class="a" style="left:152px;top:17px;width:8px;height:1px;background:#a4a4a4"></div>
  <!-- swatch -->
  <div class="a" style="left:4px;top:32px;width:24.500px;height:24px;background:#ff3fdb;border:1px solid #f4e8f4"></div>
  <div class="a" style="left:10px;top:59px;width:11px;height:11px;border-radius:50%;background:#4a66e8"></div>
  <div class="a" style="left:11px;top:60px;width:9px;height:9px;border-radius:50%;background:#fff"></div>
  <div class="a" style="left:13px;top:62px;width:5px;height:5px;border-radius:50%;background:#f040d8"></div>
  <!-- sliders -->
  <div class="n" style="left:35.500px;top:34px;color:#c8c8c8;font-size:8.300px">R</div>
  <div class="a" style="left:48.500px;top:38.500px;width:70px;height:2.500px;background:linear-gradient(90deg,#003fdb,#ff3fdb)"></div>
  <svg style="left:114.500px;top:41px" width="8" height="6" viewBox="0 0 8 6"><path d="M4 0 L7.500 3.500 V5.500 H0.500 V3.500 Z" fill="#cfcfcf"/></svg>
  <div class="inp" style="left:124px;top:33px;width:24px;height:14px"></div>
  <div class="n" style="left:127px;top:34px">255</div>
  <div class="n" style="left:35.500px;top:57px;color:#c8c8c8;font-size:8.300px">G</div>
  <div class="a" style="left:48.500px;top:61.500px;width:70px;height:2.500px;background:linear-gradient(90deg,#ff00db,#ff80e8 50%,#ffffdb)"></div>
  <svg style="left:62px;top:64px" width="8" height="6" viewBox="0 0 8 6"><path d="M4 0 L7.500 3.500 V5.500 H0.500 V3.500 Z" fill="#cfcfcf"/></svg>
  <div class="inp" style="left:124px;top:56px;width:24px;height:14px"></div>
  <div class="n" style="left:127px;top:57px">63</div>
  <div class="n" style="left:35.500px;top:80px;color:#c8c8c8;font-size:8.300px">B</div>
  <div class="a" style="left:48.500px;top:84.500px;width:70px;height:2.500px;background:linear-gradient(90deg,#ff3f00,#ff3f80 50%,#ff3fff)"></div>
  <svg style="left:105.500px;top:87px" width="8" height="6" viewBox="0 0 8 6"><path d="M4 0 L7.500 3.500 V5.500 H0.500 V3.500 Z" fill="#cfcfcf"/></svg>
  <div class="inp" style="left:124px;top:79px;width:24px;height:14px"></div>
  <div class="n" style="left:127px;top:80px">219</div>
  <!-- warning + swatch -->
  <svg style="left:7px;top:90px" width="11" height="10" viewBox="0 0 11 10"><path d="M5.500 0 L11 10 H0 Z" fill="#cfcfcf"/><path d="M5.500 3.500 V7" stroke="#535353" stroke-width="1.300"/><rect x="4.850" y="7.800" width="1.300" height="1.200" fill="#535353"/></svg>
  <div class="a" style="left:21px;top:90px;width:10px;height:10px;background:#c0509c;border:1px solid #777"></div>
  <!-- none/black/white -->
  <div class="a" style="left:4px;top:106px;width:9px;height:9px;background:#fff"></div>
  <svg style="left:4px;top:106px" width="9" height="9" viewBox="0 0 9 9"><path d="M0 9 L9 0" stroke="#e8141c" stroke-width="1.600"/></svg>
  <div class="a" style="left:13px;top:106px;width:9px;height:9px;background:#000"></div>
  <div class="a" style="left:22px;top:106px;width:9px;height:9px;background:#fff"></div>
  <div class="n" style="left:114.500px;top:104.500px;color:#cfcfcf">#</div>
  <div class="inp" style="left:122px;top:104px;width:31px;height:14px"></div>
  <div class="n" style="left:124.500px;top:105px;letter-spacing:0.500px">ff3fdb</div>
  <!-- spectrum -->
  <div class="a" style="left:4.500px;top:122.500px;width:147px;height:16px;background:linear-gradient(90deg,#f00 0%,#ff0 16.600%,#0f0 33.300%,#0ff 50%,#00f 66.600%,#f0f 83.300%,#f00 100%)"></div>
  <div class="a" style="left:4.500px;top:122.500px;width:147px;height:16px;background:linear-gradient(180deg,#fff 0%,rgba(255,255,255,0) 50%,rgba(0,0,0,0) 50%,#000 100%)"></div>
  <div class="a" style="left:0;top:143px;width:163px;height:4px;background:#4c4c4c;border-top:1px solid #444"></div>
  <div class="a" style="left:76px;top:145px;width:12px;height:1px;border-top:1px dotted #8a8a8a"></div>
</div>
<!-- gradient panel -->
<div class="a" id="grad" style="left:792px;top:207.500px;width:160px;height:201px;background:#535353;border:1px solid #3c3c3c;border-top-color:#414141">
  <div class="a" style="left:0;top:0;width:158px;height:9px;background:#414141"></div>
  <svg style="left:138px;top:2.500px" width="6" height="4" viewBox="0 0 6 4"><path d="M2.600 0.100 L0.200 2 L2.600 3.900 Z M5.200 0.100 L2.800 2 L5.200 3.900 Z" fill="#c6c6c6"/></svg>
  <svg style="left:150.500px;top:2.500px" width="5" height="4.400" viewBox="0 0 5 4.400"><path d="M0.300 0.200 L4.700 4.200 M4.700 0.200 L0.300 4.200" stroke="#d0d0d0" stroke-width="1.100"/></svg>
  <div class="a" style="left:0;top:9px;width:158px;height:19px;background:#434343"></div>
  <div class="a" style="left:0;top:9px;width:30px;height:19px;background:#484848"></div>
  <div class="a" style="left:30px;top:9px;width:33px;height:19px;background:#535353"></div>
  <div class="t" style="left:6px;top:12px;color:#a8a8a8;font-size:8.600px">段落</div>
  <svg style="left:34px;top:15px" width="3" height="6" viewBox="0 0 3 6"><path d="M0 2.300 L1.500 0.500 L3 2.300 Z M0 3.700 L1.500 5.500 L3 3.700 Z" fill="#bdbdbd"/></svg>
  <div class="t" style="left:40px;top:12px;color:#f0f0f0;font-size:8.600px">渐变</div>
  <div class="a" style="left:146px;top:15px;width:8px;height:7px;border-top:1px solid #a4a4a4;border-bottom:1px solid #a4a4a4"></div>
  <div class="a" style="left:146px;top:18px;width:8px;height:1px;background:#a4a4a4"></div>
  <!-- gradient swatch -->
  <div class="a" style="left:4px;top:32px;width:22px;height:22px;border:1px solid #2c2c2c;background:linear-gradient(90deg,#f4e68c 0%,#2ccab0 33%,#2aa4f2 62%,#f246dc 100%)"></div>
  <svg style="left:28px;top:42px" width="5" height="3" viewBox="0 0 5 3"><path d="M0 0 H5 L2.500 3 Z" fill="#d0d0d0"/></svg>
  <div class="s" style="left:45px;top:33.500px;color:#d0d0d0">类型 :</div>
  <div class="a" style="left:71px;top:31.300px;width:16px;height:16px;background:#2c2c2c"></div>
  <div class="a" style="left:73px;top:33.300px;width:12px;height:12px;border:1px solid #ececec;background:linear-gradient(90deg,#e8e8e8,#333)"></div>
  <div class="a" style="left:88.500px;top:31.300px;width:16px;height:16px;border:1px solid #5e5e5e"></div>
  <div class="a" style="left:90.500px;top:33.300px;width:12px;height:12px;border:1px solid #b0b0b0;background:radial-gradient(circle,#f0f0f0,#505050)"></div>
  <div class="a" style="left:105.500px;top:31.300px;width:16px;height:16px;border:1px solid #5a5a5a"></div>
  <div class="a" style="left:107.500px;top:33.300px;width:12px;height:12px;border:1px solid #646464;background:linear-gradient(135deg,#757575,#5a5a5a 50%,#6c6c6c)"></div>
  <div class="a" style="left:74px;top:51.500px;width:47.500px;height:14px;border:1px solid #707070;border-radius:2px"></div>
  <div class="t" style="left:81px;top:52.700px;color:#f0f0f0;font-weight:500;font-size:8.400px">编辑渐变</div>
  <!-- fill/stroke small -->
  <div class="a" style="left:4px;top:58px;width:13px;height:13px;background:#fff"></div>
  <svg style="left:4px;top:58px" width="13" height="13" viewBox="0 0 13 13"><path d="M0 13 L13 0" stroke="#e8141c" stroke-width="1.600"/></svg>
  <div class="a" style="left:10px;top:65px;width:14px;height:14px;border:1px solid #e0e0e0;background:linear-gradient(90deg,#c0e890 0%,#38d0b0 33%,#30a4f0 62%,#c060e0 100%)"></div>
  <div class="a" style="left:14px;top:69px;width:6px;height:6px;background:#4a4a4a;border:1px solid #222"></div>
  <!-- reverse icon -->
  <svg style="left:7px;top:86px" width="12" height="10" viewBox="0 0 12 10"><rect x="0.500" y="0.500" width="5.500" height="3.500" fill="#d0d0d0"/><rect x="6" y="0.500" width="2" height="3.500" fill="#888"/><path d="M9 1 H12 L10.500 3.500 Z" fill="#d0d0d0"/><path d="M0 7 H3 L1.500 5 Z" fill="#d0d0d0"/><rect x="4" y="5.800" width="2" height="3.500" fill="#888"/><rect x="6" y="5.800" width="5.500" height="3.500" fill="#d0d0d0"/></svg>
  <div class="s" style="left:45px;top:70.700px;color:#d0d0d0">描边 :</div>
  <div class="a" style="left:71px;top:69.300px;width:14.500px;height:14.500px;background:#2c2c2c"></div>
  <svg style="left:73px;top:71px" width="10.500" height="10.500" viewBox="0 0 11 11"><path d="M0.500 10.500 V0.500 H10.500 V5 H5 V10.500" fill="#d8d8d8" stroke="#f4f4f4" stroke-width="1"/><rect x="2" y="2" width="2.500" height="8.500" fill="#666"/></svg>
  <div class="a" style="left:87.300px;top:69.300px;width:14.500px;height:14.500px;border:1px solid #5c5c5c"></div>
  <svg style="left:89.300px;top:71px" width="10.500" height="10.500" viewBox="0 0 11 11"><path d="M1 10.500 V1 H10 V5 H5 V10.500" fill="#626262" stroke="#6c6c6c" stroke-width="1"/></svg>
  <div class="a" style="left:103.700px;top:69.300px;width:14.500px;height:14.500px;border:1px solid #5c5c5c"></div>
  <svg style="left:105.700px;top:71px" width="10.500" height="10.500" viewBox="0 0 11 11"><path d="M1 10.500 V1 H10 V5 H5 V10.500" fill="#5e5e5e" stroke="#6a6a6a" stroke-width="1"/></svg>
  <!-- angle -->
  <svg style="left:58px;top:89px" width="11" height="10" viewBox="0 0 11 10"><path d="M8 0.500 L1 9 H10.500" fill="none" stroke="#d4d4d4" stroke-width="1.200"/><path d="M4 5.500 A4 4 0 0 1 6 9" fill="none" stroke="#d4d4d4" stroke-width="1"/></svg>
  <div class="inp" style="left:71px;top:88px;width:35px;height:15px;background:#404040"></div>
  <div class="n" style="left:74px;top:89.500px">0°</div>
  <div class="inp" style="left:105px;top:88px;width:14px;height:15px;background:#4c4c4c"></div>
  <svg style="left:109px;top:94px" width="6" height="4" viewBox="0 0 6 4"><path d="M0.400 0.500 L3 3.100 L5.600 0.500" stroke="#ececec" stroke-width="1.150" fill="none"/></svg>
  <!-- aspect -->
  <svg style="left:57px;top:106px" width="13" height="11" viewBox="0 0 13 11"><path d="M1.500 1 V10 M0 3 L1.500 1 L3 3 M0 8 L1.500 10 L3 8" stroke="#7a7a7a" stroke-width="0.900" fill="none"/><ellipse cx="8.500" cy="5" rx="3.800" ry="2.800" fill="none" stroke="#7a7a7a" stroke-width="1"/><path d="M5 10 H12" stroke="#7a7a7a" stroke-width="0.800"/></svg>
  <div class="a" style="left:71px;top:105px;width:48px;height:15px;background:#5b5b5b;border:1px solid #606060"></div>
  <svg style="left:109px;top:111px" width="6" height="4" viewBox="0 0 6 4"><path d="M0.500 0.500 L3 3 L5.500 0.500" stroke="#777" stroke-width="1" fill="none"/></svg>
  <!-- gradient bar -->
  <div class="a" style="left:9.500px;top:134px;width:122px;height:10.500px;background:linear-gradient(90deg,#f6e08c 0%,#14c4ae 33%,#1ea8f2 62.500%,#f740dc 100%)"></div>
  <svg style="left:0;top:126px" width="158" height="32" viewBox="0 0 158 32">
    <g fill="#535353" stroke="#e4e4e4" stroke-width="0.900">
      <path d="M30.500 3 L33 5.500 L30.500 8 L28 5.500 Z"/><path d="M68.500 3 L71 5.500 L68.500 8 L66 5.500 Z"/><path d="M109.500 3 L112 5.500 L109.500 8 L107 5.500 Z"/>
    </g>
    <circle cx="10.500" cy="21.500" r="3.600" fill="#ffd86a" stroke="#f4f4f4" stroke-width="1"/><circle cx="10.500" cy="21.500" r="4.400" fill="none" stroke="#333" stroke-width="0.500"/>
    <circle cx="50.500" cy="21.500" r="3.600" fill="#10c0aa" stroke="#f4f4f4" stroke-width="1"/><circle cx="50.500" cy="21.500" r="4.400" fill="none" stroke="#333" stroke-width="0.500"/>
    <circle cx="86.500" cy="21.500" r="3.600" fill="#18a6f4" stroke="#f4f4f4" stroke-width="1"/><circle cx="86.500" cy="21.500" r="4.400" fill="none" stroke="#333" stroke-width="0.500"/>
    <circle cx="130.500" cy="21.500" r="5" fill="#5a78f0"/><circle cx="130.500" cy="21.500" r="4" fill="#fff"/><circle cx="130.500" cy="21.500" r="2.900" fill="#f23fdc"/>
  </svg>
  <!-- trash -->
  <svg style="left:142px;top:135px" width="9" height="11" viewBox="0 0 9 11"><path d="M0 2 H9 M3 2 V0.500 H6 V2" stroke="#cfcfcf" stroke-width="1.200" fill="none"/><path d="M1 3 H8 L7.500 11 H1.500 Z" fill="#cfcfcf"/><path d="M3.300 4.500 V9.500 M5.700 4.500 V9.500" stroke="#535353" stroke-width="0.800"/></svg>
  <!-- eyedropper -->
  <svg style="left:7px;top:167px" width="13" height="14" viewBox="0 0 13 14"><path d="M1 13 L1.500 10.500 L7.500 4.500 L9.500 6.500 L3.500 12.500 Z" fill="none" stroke="#d0d0d0" stroke-width="1"/><path d="M7.500 2.500 L11 6 M10 1.500 L12 3.500" stroke="#d0d0d0" stroke-width="2.300" stroke-linecap="round"/></svg>
  <div class="s" style="left:29px;top:159px;color:#d4d4d4">不透明度 :</div>
  <div class="inp" style="left:71px;top:157px;width:35px;height:15px;background:#404040"></div>
  <div class="n" style="left:73.500px;top:158.200px">100<span style="display:inline-block;transform:scaleX(0.620);transform-origin:0 50%">%</span></div>
  <div class="inp" style="left:105px;top:157px;width:14px;height:15px;background:#4c4c4c"></div>
  <svg style="left:109px;top:163px" width="6" height="4" viewBox="0 0 6 4"><path d="M0.400 0.500 L3 3.100 L5.600 0.500" stroke="#ececec" stroke-width="1.150" fill="none"/></svg>
  <div class="s" style="left:46px;top:177px;color:#d4d4d4">位置 :</div>
  <div class="inp" style="left:71px;top:175px;width:35px;height:15px;background:#404040"></div>
  <div class="n" style="left:73.500px;top:176.200px">100<span style="display:inline-block;transform:scaleX(0.620);transform-origin:0 50%">%</span></div>
  <div class="inp" style="left:105px;top:175px;width:14px;height:15px;background:#4c4c4c"></div>
  <svg style="left:109px;top:181px" width="6" height="4" viewBox="0 0 6 4"><path d="M0.400 0.500 L3 3.100 L5.600 0.500" stroke="#ececec" stroke-width="1.150" fill="none"/></svg>
  <div class="a" style="left:0;top:194px;width:158px;height:5px;background:#4c4c4c;border-top:1px solid #444"></div>
  <div class="a" style="left:74px;top:196px;width:12px;height:1px;border-top:1px dotted #8a8a8a"></div>
</div>
</body></html>
